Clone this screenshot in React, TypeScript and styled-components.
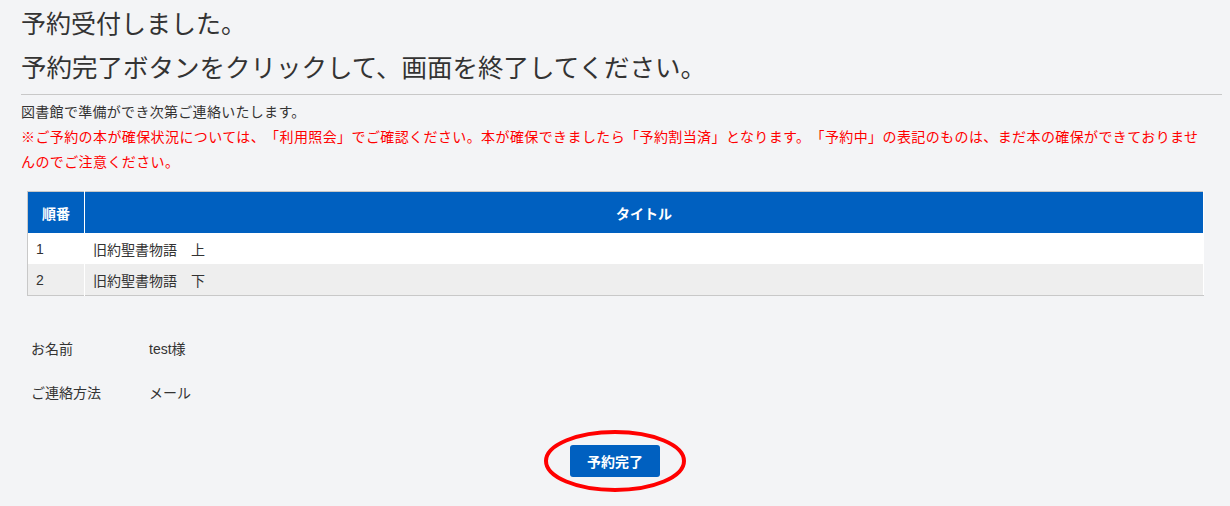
import React from "react";
import styled, { createGlobalStyle } from "styled-components";

const Global = createGlobalStyle`
  html, body { margin: 0; padding: 0; background: #f3f4f6; min-height: 506px; }
  body {
    font-family: "Liberation Sans", "Noto Sans CJK JP", sans-serif;
    color: #333;
    text-spacing-trim: space-all;
  }
`;

const Page = styled.div`
  padding: 6px 8px 20px 21px;
  width: 1230px;
  box-sizing: border-box;
`;

const Title = styled.h1`
  margin: 0;
  font-size: 25px;
  font-weight: 400;
  line-height: 36px;
  color: #333;
`;

const SubTitle = styled.h2`
  margin: 8px 0 0;
  font-size: 25.5px;
  font-weight: 400;
  line-height: 36px;
  color: #333;
  padding-bottom: 8px;
  border-bottom: 1px solid #c8c8c8;
`;

const Notes = styled.div`
  margin-top: 5px;
  font-size: 14px;
  line-height: 25px;
  padding-right: 14px;
`;

const Note = styled.p<{ $alert?: boolean }>`
  margin: 0;
  color: ${(p) => (p.$alert ? "#ff0000" : "#333")};
  letter-spacing: ${(p) => (p.$alert ? "0.4px" : "0.3px")};
`;

const Table = styled.table`
  margin: 16px 0 0 6px;
  width: 1177px;
  border-collapse: collapse;
  border: 1px solid #c8c8c8;
  border-right-color: #fff;
  font-size: 14px;
`;

const Th = styled.th<{ $narrow?: boolean }>`
  background: #0060c0;
  color: #fff;
  font-weight: 700;
  font-size: 14px;
  height: 41px;
  padding: 0;
  width: ${(p) => (p.$narrow ? "56px" : "auto")};
  border-left: 1px solid #fff;
  &:first-child { border-left: none; }
`;

const Tr = styled.tr<{ $alt?: boolean }>`
  background: ${(p) => (p.$alt ? "#eeeeee" : "#ffffff")};
`;

const Td = styled.td`
  height: 31px;
  padding: 0 0 0 8px;
  color: #333;
  border-left: 1px solid #fff;
  &:first-child { border-left: none; }
`;

const Info = styled.dl`
  margin: 44px 0 0 10px;
  display: grid;
  grid-template-columns: 118px 1fr;
  row-gap: 26px;
  font-size: 14px;
  line-height: 18px;
`;

const Label = styled.dt`
  margin: 0;
  color: #333;
`;

const Value = styled.dd`
  margin: 0;
  color: #333;
`;

const Actions = styled.div`
  display: flex;
  justify-content: center;
  margin-top: 43px;
  padding-right: 13px;
`;

const ButtonWrap = styled.div`
  position: relative;
  display: flex;
`;

const Button = styled.button`
  width: 90px;
  height: 32px;
  background: #0060c0;
  color: #fff;
  border: none;
  border-radius: 3px;
  font-family: "Liberation Sans", "Noto Sans CJK JP", sans-serif;
  font-size: 14px;
  font-weight: 700;
  cursor: pointer;
`;

const Ring = styled.svg`
  position: absolute;
  left: -26px;
  top: -15px;
  width: 142px;
  height: 62px;
  overflow: visible;
  pointer-events: none;
`;

const books = ["旧約聖書物語　上", "旧約聖書物語　下"];

export default function App() {
  return (
    <>
      <Global />
      <Page>
        <Title>予約受付しました。</Title>
        <SubTitle>予約完了ボタンをクリックして、画面を終了してください。</SubTitle>
        <Notes>
          <Note>図書館で準備ができ次第ご連絡いたします。</Note>
          <Note $alert>
            ※ご予約の本が確保状況については、「利用照会」でご確認ください。本が確保できましたら「予約割当済」となります。「予約中」の表記のものは、まだ本の確保ができておりませんのでご注意ください。
          </Note>
        </Notes>
        <Table>
          <thead>
            <tr>
              <Th $narrow>順番</Th>
              <Th>タイトル</Th>
            </tr>
          </thead>
          <tbody>
            {books.map((b, i) => (
              <Tr key={b} $alt={i % 2 === 1}>
                <Td>{i + 1}</Td>
                <Td>{b}</Td>
              </Tr>
            ))}
          </tbody>
        </Table>
        <Info>
          <Label>お名前</Label>
          <Value>test様</Value>
          <Label>ご連絡方法</Label>
          <Value>メール</Value>
        </Info>
        <Actions>
          <ButtonWrap>
            <Button>予約完了</Button>
            <Ring viewBox="0 0 142 62">
              <ellipse cx="71" cy="31" rx="69" ry="29" fill="none" stroke="#ff0000" strokeWidth="4" />
            </Ring>
          </ButtonWrap>
        </Actions>
      </Page>
    </>
  );
}
